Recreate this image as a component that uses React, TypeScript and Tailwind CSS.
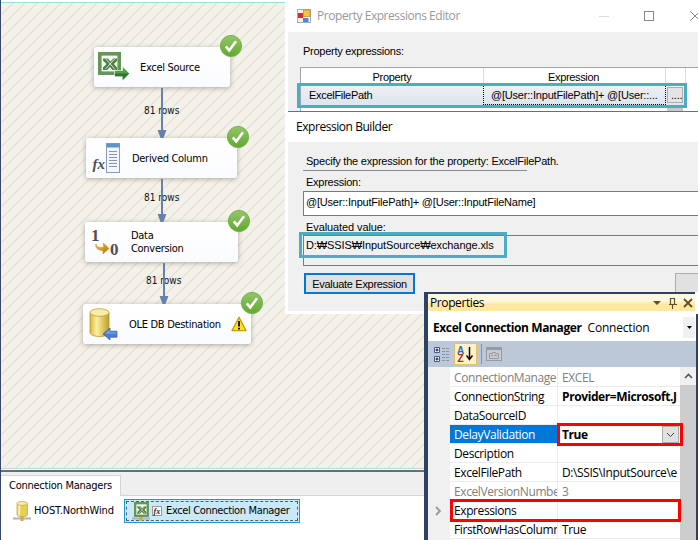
import React from "react";

const tahoma = "font-['DejaVu_Sans_Condensed','DejaVu_Sans',sans-serif] font-stretch-condensed";
const segoe = "font-['Open_Sans','Noto_Sans',sans-serif]";
const arial = "font-['Liberation_Sans','Noto_Sans_CJK_KR',sans-serif]";

function Check({ className }: { className: string }) {
  return (
    <svg className={`absolute ${className}`} width="24" height="24" viewBox="0 0 24 24">
      <defs>
        <linearGradient id="ok" x1="0" y1="0" x2="0" y2="1">
          <stop offset="0" stopColor="#94c66d" />
          <stop offset="1" stopColor="#62a72e" />
        </linearGradient>
      </defs>
      <circle cx="12" cy="12" r="10.6" fill="url(#ok)" stroke="#76b34a" strokeWidth="1" />
      <path d="M6.800 12.400l3.400 4L17 7.200" fill="none" stroke="#fff" strokeWidth="2.600" />
    </svg>
  );
}

function ExcelMark() {
  return (
    <>
      <rect x="1.800" y="1.800" width="19.400" height="19.400" fill="#f6faf4" stroke="#659657" strokeWidth="3.600" />
      <path d="M5 6.500h5l2.500 3 2.800-3H19v2.500l-3.200 3 3.200 3.500V18h-4.500L12 15l-2.800 3H5v-2.500L8.500 12 5 8.500z" fill="#4d8141" />
      <path d="M7.500 6.500L17 17.500M17 6.500L7.500 17" stroke="#e8f1e4" strokeWidth=".9" />
    </>
  );
}

function ExcelSourceIcon() {
  return (
    <svg className="shrink-0" width="32" height="30" viewBox="0 0 32 30">
      <ExcelMark />
      <path d="M16.500 18.500h8v-4.200l7 7.200-7 7.200v-4.200h-8z" fill="#55a045" stroke="#fff" strokeWidth=".6" />
      <path d="M17 21.500h14.200l-6.500 6.500v-3.800H17z" fill="#2f7430" />
    </svg>
  );
}

function DerivedIcon() {
  return (
    <svg className="shrink-0" width="30" height="31" viewBox="0 0 30 31">
      <rect x="15.500" y=".5" width="13" height="29" fill="#f3f6fb" stroke="#8d9cbc" />
      <rect x="15.500" y=".5" width="13" height="4" fill="#5f93cf" />
      <path d="M18 8.500h8M18 11.500h8M18 14.500h8M18 17.500h8M18 20.500h8M18 23.500h8" stroke="#8795b3" />
      <text x="1.500" y="26" className="font-['Liberation_Serif',serif] text-[15px] font-bold italic" fill="#505050">fx</text>
    </svg>
  );
}

function ConversionIcon() {
  return (
    <svg className="shrink-0" width="30" height="30" viewBox="0 0 30 30">
      <defs>
        <linearGradient id="orange" x1="0" y1="0" x2="1" y2="1">
          <stop offset="0" stopColor="#ffc83c" />
          <stop offset="1" stopColor="#b06a00" />
        </linearGradient>
      </defs>
      <text x="0" y="14" className="font-['Liberation_Serif',serif] text-[17px] font-bold" fill="#505050">1</text>
      <text x="19" y="28" className="font-['Liberation_Serif',serif] text-[17px] font-bold" fill="#505050">0</text>
      <path d="M5 17c0 3 3 3.500 7.500 3.500V16l5.500 5.500-6 5.500v-3.500C7 23.500 4 21 5 17z" fill="url(#orange)" stroke="#c98516" strokeWidth=".5" />
    </svg>
  );
}

function DestinationIcon() {
  return (
    <svg className="shrink-0" width="29" height="33" viewBox="0 0 29 33">
      <defs>
        <linearGradient id="gold" x1="0" x2="1">
          <stop offset="0" stopColor="#d9b83c" />
          <stop offset=".35" stopColor="#fbf0a0" />
          <stop offset="1" stopColor="#c29c27" />
        </linearGradient>
      </defs>
      <path d="M1 4.500v20c0 2.200 4 4 9.500 4s9.500-1.800 9.500-4v-20z" fill="url(#gold)" stroke="#b8952b" strokeWidth=".8" />
      <ellipse cx="10.500" cy="4.500" rx="9.500" ry="3.800" fill="#f8eda6" stroke="#c1a037" strokeWidth=".8" />
      <path d="M14 26l7-6v3.200h7v6h-7V32z" fill="#4b7bd4" stroke="#2f5cad" strokeWidth=".7" />
      <path d="M16 25.500l4.500-3.500v2.500h7v1z" fill="#86abeb" />
    </svg>
  );
}

function Warning() {
  return (
    <svg className="shrink-0" width="16" height="16" viewBox="0 0 16 16">
      <path d="M8 1.200L15 14.600H1z" fill="#ffe21c" stroke="#c89d00" strokeWidth="1.300" strokeLinejoin="round" />
      <path d="M8 5v5.500M8 11.800v1.700" stroke="#111" strokeWidth="1.900" />
    </svg>
  );
}

function Arrow({ className, height }: { className: string; height: number }) {
  return (
    <svg className={`absolute ${className}`} width="10" height={height}>
      <path d={`M5 0V${height - 6}`} stroke="#6482ac" strokeWidth="2" />
      <path d={`M.6 ${height - 8}h8.800L6.500 ${height}h-3z`} fill="#6482ac" />
    </svg>
  );
}

const nodeBox =
  "absolute flex h-10 items-center rounded-[3px] bg-gradient-to-b from-white to-[#fafbff] shadow-[0_1px_5px_rgba(110,100,80,0.5)]";
const nodeText = `${tahoma} text-[11px] leading-[13px] tracking-[-0.3px] whitespace-nowrap text-black`;
const rowText = `absolute ${tahoma} text-[10px] leading-[12px] whitespace-nowrap text-[#111]`;

function Diagram() {
  return (
    <div className="relative h-[466px] overflow-hidden border-t border-[#a5d5e8] bg-[#f4f1e9]">
      <svg className="absolute inset-0" width="698" height="466">
        <defs>
          <pattern id="hatch" width="12" height="12" patternUnits="userSpaceOnUse">
            <path d="M-1 13L13 -1M-1 1L1 -1M11 13L13 11" stroke="#e3e1d9" strokeWidth="1.300" />
          </pattern>
        </defs>
        <rect width="698" height="466" fill="url(#hatch)" />
      </svg>
      <div className={`${nodeBox} top-[44px] left-[93px] w-[136px] pl-1`}>
        <ExcelSourceIcon />
        <span className={`${nodeText} ml-[10px]`}>Excel Source</span>
      </div>
      <div className={`${nodeBox} top-[135px] left-[85px] w-[151px] pl-[5px]`}>
        <DerivedIcon />
        <span className={`${nodeText} ml-[11px]`}>Derived Column</span>
      </div>
      <div className={`${nodeBox} top-[219px] left-[84px] w-[153px] pl-[6px]`}>
        <ConversionIcon />
        <span className={`${nodeText} ml-[10px]`}>Data<br />Conversion</span>
      </div>
      <div className={`${nodeBox} top-[301px] left-[82px] w-[168px] pl-[6px]`}>
        <DestinationIcon />
        <span className={`${nodeText} ml-[11px] w-[102px]`}>OLE DB Destination</span>
        <Warning />
      </div>
      <Check className="top-[31px] left-[218px]" />
      <Check className="top-[122px] left-[225px]" />
      <Check className="top-[206px] left-[226px]" />
      <Check className="top-[288px] left-[239px]" />
      <span className={`${rowText} top-[102px] left-[143px]`}>81 rows</span>
      <span className={`${rowText} top-[189px] left-[143px]`}>81 rows</span>
      <span className={`${rowText} top-[272px] left-[145px]`}>81 rows</span>
      <Arrow className="top-[85px] left-[156px]" height={50} />
      <Arrow className="top-[176px] left-[156px]" height={43} />
      <Arrow className="top-[260px] left-[158px]" height={41} />
    </div>
  );
}

function ConnectionManagers() {
  return (
    <div className="flex flex-1 flex-col bg-white">
      <div className="h-px bg-[#b5dbe5]" />
      <div className="mt-px h-[2px] bg-[#6c6c70]" />
      <div className="h-[3px] bg-[#efefef]" />
      <div className="flex h-[21px] bg-[#efefef]">
        <div className={`${tahoma} w-[120px] border-t border-r border-[#d4d4d4] bg-white pl-[8px] text-[11px] leading-[20px] tracking-[-0.25px] whitespace-nowrap`}>
          Connection Managers
        </div>
        <div className="flex-1 border-b border-[#d4d4d4]" />
      </div>
      <div className="flex items-center pt-[3px] pl-[12px]">
        <svg className="shrink-0" width="18" height="20" viewBox="0 0 18 20">
          <path d="M0 17.500h18" stroke="#a7b0c4" strokeWidth="2" />
          <path d="M9 15v5" stroke="#dba73a" strokeWidth="3" />
          <path d="M4 2.500v11c0 1.500 2 2.300 5.200 2.300s5.300-.8 5.300-2.300v-11z" fill="#e6cf55" stroke="#c0a038" strokeWidth=".7" />
          <path d="M6.200 4v10.500" stroke="#fbf3ae" strokeWidth="2" />
          <ellipse cx="9.200" cy="2.500" rx="5.300" ry="2" fill="#f8eda6" stroke="#c0a038" strokeWidth=".7" />
        </svg>
        <span className={`${tahoma} ml-[3px] w-[90px] text-[11px] tracking-[-0.15px] whitespace-nowrap`}>HOST.NorthWind</span>
        <div className="h-6 w-[176px] border border-[#1a9ad8] bg-[#cbe8f6] p-px">
          <div className="flex h-full items-center border border-dashed border-[#52626b] pl-[5px]">
            <svg className="shrink-0" width="18" height="20" viewBox="0 0 18 20">
              <path d="M0 17.500h18" stroke="#a7b0c4" strokeWidth="2" />
              <path d="M9 15v5" stroke="#dba73a" strokeWidth="3" />
              <g transform="translate(2 1) scale(.65)"><ExcelMark /></g>
            </svg>
            <svg className="ml-[2px] shrink-0" width="10" height="10" viewBox="0 0 10 10">
              <rect x=".5" y=".5" width="9" height="9" fill="#fff" stroke="#9a9aa5" />
              <text x="1.500" y="8" className="font-['Liberation_Serif',serif] text-[8px] font-bold italic" fill="#222">fx</text>
            </svg>
            <span className={`${tahoma} ml-[4px] text-[11px] tracking-[-0.35px] whitespace-nowrap`}>Excel Connection Manager</span>
          </div>
        </div>
      </div>
    </div>
  );
}

function ExpressionsEditor() {
  return (
    <div className="absolute top-0 left-[285px] flex h-[314px] w-[413px] flex-col bg-white pl-[3px]">
      <div className="flex h-8 items-center pl-[9px]">
        <svg width="14" height="14" viewBox="0 0 14 14">
          <rect x=".5" y=".5" width="13" height="13" fill="#f4f4f4" stroke="#aaa" />
          <rect x="1" y="4" width="5" height="5" fill="#c93525" />
          <rect x="6.500" y="1" width="6.500" height="6.500" fill="#f6c63a" stroke="#b98d1d" strokeWidth=".7" />
          <rect x="6" y="9" width="5.500" height="4" fill="#4b87dd" />
        </svg>
        <span className={`${segoe} ml-[6px] flex-1 text-[12px] tracking-[-0.45px] whitespace-nowrap text-[#999]`}>Property Expressions Editor</span>
        <svg width="100" height="12" viewBox="0 0 100 12" fill="none">
          <path d="M1 6.500h10" stroke="#ddd" />
          <rect x="46.500" y="1.500" width="9" height="9" stroke="#888" />
          <path d="M92 1l10 10M92 11L102 1" stroke="#888" />
        </svg>
      </div>
      <div className={`${arial} flex h-[79px] flex-col overflow-hidden bg-[#f0f0f0] text-[11px]`}>
        <div className="h-[35px] pt-[12px] pl-[15px] leading-[14px] tracking-[-0.27px]">Property expressions:</div>
        <div className="relative ml-[12px] flex-1 border-t border-l border-[#a0a4ac] bg-white">
          <div className="flex h-[17px] text-center leading-[18px] tracking-[-0.35px]">
            <div className="w-[183px] border-r border-[#ddd]">Property</div>
            <div className="w-[182px] border-r border-[#ddd] pr-[2px]">Expression</div>
            <div className="w-[20px] border-r border-[#ddd]" />
          </div>
          <div className="flex h-[20px] w-[385px] bg-gradient-to-b from-[#edf0f5] to-[#dfe5ee] leading-[21px] whitespace-nowrap">
            <div className="w-[182px] shrink-0 pl-2 tracking-[-0.3px]">ExcelFilePath</div>
            <div className="w-[183px] shrink-0 border border-dotted border-black pl-[7px] leading-[19px] tracking-[-0.2px]">@[User::InputFilePath]+ @[User::...</div>
            <div className="mt-[2px] ml-px h-[16px] w-[16px] shrink-0 border border-[#adadad] bg-[#e4e4e4] pl-[3px] leading-[14px] tracking-[-0.2px]">....</div>
          </div>
          <div className="ml-[366px] h-[6px] w-[16px] bg-[#c9c9c9]" />
          <div className="absolute top-[15px] left-[-4px] h-[25px] w-[390px] border-3 border-[#4bacc6]" />
        </div>
      </div>
      <div className={`${segoe} h-[31px] border-t border-[#4478b0] bg-white pl-[8px] text-[12px] leading-[30px] tracking-[-0.45px]`}>Expression Builder</div>
      <div className={`${arial} flex h-[169px] flex-col bg-[#f0f0f0] pl-[15px] text-[11px] whitespace-nowrap`}>
        <div className="h-[29px] w-[224px] border-b border-[#8a8a96] pt-[12px] pl-[3px] leading-[14px] tracking-[-0.22px]">Specify the expression for the property: ExcelFilePath.</div>
        <div className="h-[20px] pt-[4px] pl-[3px] leading-[14px] tracking-[-0.25px]">Expression:</div>
        <div className="h-[25px] border border-r-0 border-[#7a7a7a] bg-white pt-[3px] pl-[2px] leading-[14px] tracking-[-0.21px]">@[User::InputFilePath]+ @[User::InputFileName]</div>
        <div className="h-[19px] pt-[4px] pl-[3px] leading-[14px] tracking-[-0.1px]">Evaluated value:</div>
        <div className="relative h-[31px] border border-r-0 border-[#7a7a7a] pt-[2px] pl-[2px] leading-[14px] tracking-[-0.1px]">
          D:₩SSIS₩InputSource₩exchange.xls
          <div className="absolute top-[-4px] left-[-5px] h-[26px] w-[208px] border-3 border-[#4bacc6]" />
        </div>
        <div className="mt-[7px] flex justify-between pl-px">
          <div className="h-[21px] w-[111px] border-2 border-[#0078d7] bg-[#e1e1e1] text-center leading-[18px] tracking-[-0.3px]">Evaluate Expression</div>
          <div className="h-[21px] w-[23px] border border-r-0 border-[#adadad] bg-[#e1e1e1]" />
        </div>
      </div>
    </div>
  );
}

const rows: { name: string; value: string; dim?: boolean; bold?: boolean; selected?: boolean }[] = [
  { name: "ConnectionManage", value: "EXCEL", dim: true },
  { name: "ConnectionString", value: "Provider=Microsoft.J", bold: true },
  { name: "DataSourceID", value: "" },
  { name: "DelayValidation", value: "True", bold: true, selected: true },
  { name: "Description", value: "" },
  { name: "ExcelFilePath", value: "D:\\SSIS\\InputSource\\e" },
  { name: "ExcelVersionNumbe", value: "3", dim: true },
  { name: "Expressions", value: "" },
  { name: "FirstRowHasColumn", value: "True" },
];

function Properties() {
  return (
    <div className={`${segoe} absolute top-[292px] left-[424px] flex h-[248px] w-[274px] flex-col border-l-4 border-[#2f4264] bg-white text-[12px] whitespace-nowrap`}>
      <div className="flex h-[19px] w-[267px] items-center border-t-2 border-[#2f4264] bg-gradient-to-b from-[#fff8df] from-40% to-[#ffe8a1] to-60% pl-[2px]">
        <span className="flex-1 text-[12px] leading-[16px] tracking-[-0.4px]">Properties</span>
        <svg width="42" height="14" viewBox="0 0 42 14" fill="none" stroke="#5f4f28">
          <path d="M0 5h8L4 9z" fill="#5f4f28" stroke="none" />
          <path d="M17.500 2.500h4v6h-4zM16 8.500h8M19.500 9v4M21.500 2v6" strokeWidth="1.200" />
          <path d="M31 3l8 8M39 3l-8 8" strokeWidth="1.800" />
        </svg>
      </div>
      <div className="h-[3px] bg-white" />
      <div className="flex flex-1 flex-col border-r-2 border-[#2f4264] bg-[#bcc7d8]">
        <div className="flex h-[27px] items-center bg-white pl-[5px]">
          <span className="text-[12px] font-bold tracking-[-0.4px]">Excel Connection Manager</span>
          <span className="ml-[6px] flex-1 tracking-[-0.2px]">Connection</span>
          <div className="mr-px flex h-[21px] w-[12px] items-center justify-center bg-[#f0f0f0]">
            <svg width="5" height="3"><path d="M0 0h5L2.500 3z" fill="#000" /></svg>
          </div>
        </div>
        <div className="flex h-[26px] items-center pl-[6px]">
          <svg width="16" height="17" viewBox="0 0 16 17" fill="none">
            <path d="M.5 1.500h5v5h-5zM.5 10.500h5v5h-5z" fill="#fff" stroke="#3c5b9c" />
            <path d="M1.500 4h3M3 2.500v3M1.500 13h3M3 11.500v3" stroke="#000" />
            <path d="M8 2.500h3m1 0h3M8 5.500h3m1 0h3M8 8.500h3m1 0h3M8 11.500h3m1 0h3M8 14.500h3m1 0h3" stroke="#8793a8" />
          </svg>
          <div className="ml-[4px] flex h-[22px] w-[23px] items-center justify-center border border-[#e5c365] bg-[#fff2ca]">
            <svg width="17" height="18" viewBox="0 0 17 18">
              <text x="0" y="8.500" className="font-['Liberation_Sans',sans-serif] text-[10px] font-bold" fill="#3567b5">A</text>
              <text x=".5" y="17" className="font-['Liberation_Sans',sans-serif] text-[10px] font-bold" fill="#a32a35">Z</text>
              <path d="M12.500 2v12M9.500 10.500l3 4 3-4" fill="none" stroke="#111" strokeWidth="1.500" />
            </svg>
          </div>
          <div className="mx-[4px] h-[20px] w-px bg-[#8591a5]" />
          <svg width="16" height="16" viewBox="0 0 16 16" fill="none" stroke="#969ba3">
            <rect x=".5" y="1.500" width="15" height="13" fill="#c7cbd1" />
            <path d="M1 3h14" strokeWidth="2" />
            <path d="M3.500 7.500h3v-1h3v1h3v5h-9zM5 9.500h2m1 0h3" />
          </svg>
        </div>
        <div className="relative flex h-[173px] overflow-hidden bg-white">
          <div className="relative w-[22px] bg-[#f0f0f0]">
            <svg className="absolute top-[139px] left-[7px]" width="7" height="10"><path d="M1 1l4 4-4 4" fill="none" stroke="#999" strokeWidth="1.800" /></svg>
          </div>
          <div className="w-[230px] pt-px">
            {rows.map((r) => (
              <div key={r.name} className={`flex h-[19px] leading-[19px] tracking-[-0.4px] ${r.dim ? "text-[#808080]" : "text-black"}`}>
                <div className={`w-[108px] border-r border-b border-[#ececec] ${r.selected ? "bg-[#0078d7] text-white" : ""}`}>
                  <div className="ml-[4px] w-[103px] overflow-hidden">{r.name}</div>
                </div>
                <div className="w-[122px] overflow-hidden border-b border-[#ececec] pl-[4px]">
                  <div className={`w-[117px] overflow-hidden ${r.bold ? "font-bold" : ""}`}>{r.value}</div>
                </div>
              </div>
            ))}
          </div>
          <div className="w-[16px] bg-[#cdcdcd]">
            <div className="flex h-[18px] items-center justify-center bg-[#f0f0f0]">
              <svg width="9" height="6"><path d="M1 5l3.500-3.500L8 5" fill="none" stroke="#555" strokeWidth="1.600" /></svg>
            </div>
          </div>
          <div className="absolute top-[59px] left-[234px] flex h-[17px] w-[17px] items-center justify-center border border-[#adadad] bg-[#e1e1e1]">
            <svg width="9" height="6"><path d="M1 1l3.500 3.500L8 1" fill="none" stroke="#444" /></svg>
          </div>
          <div className="absolute top-[56px] left-[129px] h-[23px] w-[126px] border-3 border-[#f00]" />
          <div className="absolute top-[132px] left-[22px] h-[23px] w-[231px] border-3 border-[#f00]" />
        </div>
      </div>
    </div>
  );
}

export default function App() {
  return (
    <div className="relative flex h-[540px] w-[698px] flex-col overflow-hidden border-l border-[#34466a] bg-white pt-[2px] text-black">
      <Diagram />
      <ConnectionManagers />
      <div className="absolute inset-y-0 -left-px w-[698px]">
        <ExpressionsEditor />
        <Properties />
      </div>
    </div>
  );
}
